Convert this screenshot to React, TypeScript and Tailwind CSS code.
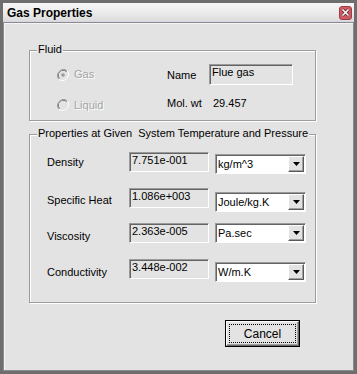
import React from "react";

const bg = "bg-[#e3e3e3]";

const rows = [
  { label: "Density", value: "7.751e-001", unit: "kg/m^3", rowMt: "mt-[17px]", labelMt: "mt-[4px]", comboMt: "mt-[2px]" },
  { label: "Specific Heat", value: "1.086e+003", unit: "Joule/kg.K", rowMt: "mt-[14px]", labelMt: "mt-[6px]", comboMt: "mt-[4px]" },
  { label: "Viscosity", value: "2.363e-005", unit: "Pa.sec", rowMt: "mt-[11px]", labelMt: "mt-[7px]", comboMt: "mt-0" },
  { label: "Conductivity", value: "3.448e-002", unit: "W/m.K", rowMt: "mt-[16px]", labelMt: "mt-[7px]", comboMt: "mt-[3px]" },
];

function GroupBox({ title, className, children }: { title: string; className: string; children: React.ReactNode }) {
  return (
    <div className={`relative border border-[#9c9c9c] shadow-[inset_1px_1px_0_#fff,1px_1px_0_#fff] ${className}`}>
      <span className={`absolute left-[7px] top-[-8px] px-[1px] leading-[13px] whitespace-pre ${bg}`}>{title}</span>
      {children}
    </div>
  );
}

function Radio({ checked, label }: { checked?: boolean; label: string }) {
  return (
    <div className="flex items-center gap-[5px]">
      <svg width="12" height="12" viewBox="0 0 12 12">
        <path d="M10.2 1.8 A6 6 0 0 0 1.8 10.2" fill="none" stroke="#9a9a9a" strokeWidth="1" />
        <path d="M9.5 2.5 A5 5 0 0 0 2.5 9.5" fill="none" stroke="#5a5a5a" strokeWidth="1" />
        <path d="M1.8 10.2 A6 6 0 0 0 10.2 1.8" fill="none" stroke="#ffffff" strokeWidth="1" />
        <circle cx="6" cy="6" r="4.3" fill="#e3e3e3" />
        {checked && <circle cx="6" cy="6" r="1.8" fill="#9a9a9a" />}
      </svg>
      <span className="text-[#a3a3a3] [text-shadow:1px_1px_0_#ffffff] leading-[13px]">{label}</span>
    </div>
  );
}

function Edit({ value, className }: { value: string; className: string }) {
  return (
    <div
      className={`border border-t-[#9a9a9a] border-l-[#9a9a9a] border-b-white border-r-white shadow-[inset_1px_1px_0_#646464] pl-[2px] pt-[1px] leading-[13px] ${bg} ${className}`}
    >
      {value}
    </div>
  );
}

function Combo({ value, className }: { value: string; className: string }) {
  return (
    <div
      className={`flex items-center justify-between border border-t-[#9a9a9a] border-l-[#9a9a9a] border-b-white border-r-white shadow-[inset_1px_1px_0_#646464] bg-white pl-[2px] pr-[1px] w-[91px] h-[20px] ${className}`}
    >
      <span className="leading-[13px]">{value}</span>
      <div className="flex items-center justify-center w-[16px] h-[16px] bg-[#e3e3e3] border border-t-white border-l-white border-b-[#5a5a5a] border-r-[#5a5a5a] shadow-[inset_-1px_-1px_0_#a0a0a0]">
        <svg width="7" height="4" viewBox="0 0 7 4">
          <path d="M0 0 H7 L3.5 4 Z" fill="#000" />
        </svg>
      </div>
    </div>
  );
}

export default function App() {
  return (
    <div className={`w-[357px] h-[374px] flex flex-col border-[3px] border-[#6e6e6e] text-[11px] text-black font-['Liberation_Sans',Arial,sans-serif] ${bg}`}>
      <div className="h-[19px] flex items-center justify-between pl-[4px] pr-[2px] bg-gradient-to-b from-[#f6f6f6] via-[#ececec] to-[#dcdcdc] border-b border-[#d8d5e6]">
        <span className="text-[12px] font-bold leading-none mt-[2px]">Gas Properties</span>
        <div className="w-[13px] h-[14px] mt-[1px] rounded-[3px] bg-[#cf5b63] border border-[#9e3a44] flex items-center justify-center">
          <svg width="9" height="9" viewBox="0 0 9 9">
            <path d="M1.5 1.5 L7.5 7.5 M7.5 1.5 L1.5 7.5" stroke="#5a1d22" strokeWidth="3" />
            <path d="M1.5 1.5 L7.5 7.5 M7.5 1.5 L1.5 7.5" stroke="#ffffff" strokeWidth="1.6" />
          </svg>
        </div>
      </div>

      <div className="flex-1 flex flex-col border border-[#8c8c8c] shadow-[inset_1px_1px_0_#f4f4f4]">
        <GroupBox title="Fluid" className="ml-[25px] mt-[27px] w-[287px]">
          <div className="grid grid-cols-[110px_42px_84px] pl-[27px] pt-[13px] pb-[6px] items-center">
            <div className="h-[21px] flex items-center">
              <Radio checked label="Gas" />
            </div>
            <span className="leading-[13px] mt-[1px]">Name</span>
            <Edit value="Flue gas" className="h-[21px] w-[84px]" />
            <div className="h-[21px] mt-[8px] flex items-center pt-[3px]">
              <Radio label="Liquid" />
            </div>
            <span className="leading-[13px] mt-[8px]">Mol. wt</span>
            <span className="leading-[13px] mt-[8px] pl-[4px]">29.457</span>
          </div>
        </GroupBox>

        <GroupBox title="Properties at Given  System Temperature and Pressure" className="ml-[25px] mt-[13px] w-[287px] pb-[20px]">
          {rows.map((r) => (
            <div key={r.label} className={`flex items-start pl-[17px] ${r.rowMt}`}>
              <span className={`w-[82px] leading-[13px] ${r.labelMt}`}>{r.label}</span>
              <Edit value={r.value} className="w-[80px] h-[20px]" />
              <Combo value={r.unit} className={`ml-[6px] ${r.comboMt}`} />
            </div>
          ))}
        </GroupBox>

        <div className="ml-[221px] mt-[17px] w-[75px] h-[27px] border border-black">
          <div className="w-full h-full flex items-center justify-center border border-t-white border-l-white border-b-[#6a6a6a] border-r-[#6a6a6a] shadow-[inset_-1px_-1px_0_#a0a0a0] p-[2px]">
            <div className="w-full h-full flex items-center justify-center border border-dotted border-black">
              <span className="text-[12px] leading-none">Cancel</span>
            </div>
          </div>
        </div>
      </div>
    </div>
  );
}
